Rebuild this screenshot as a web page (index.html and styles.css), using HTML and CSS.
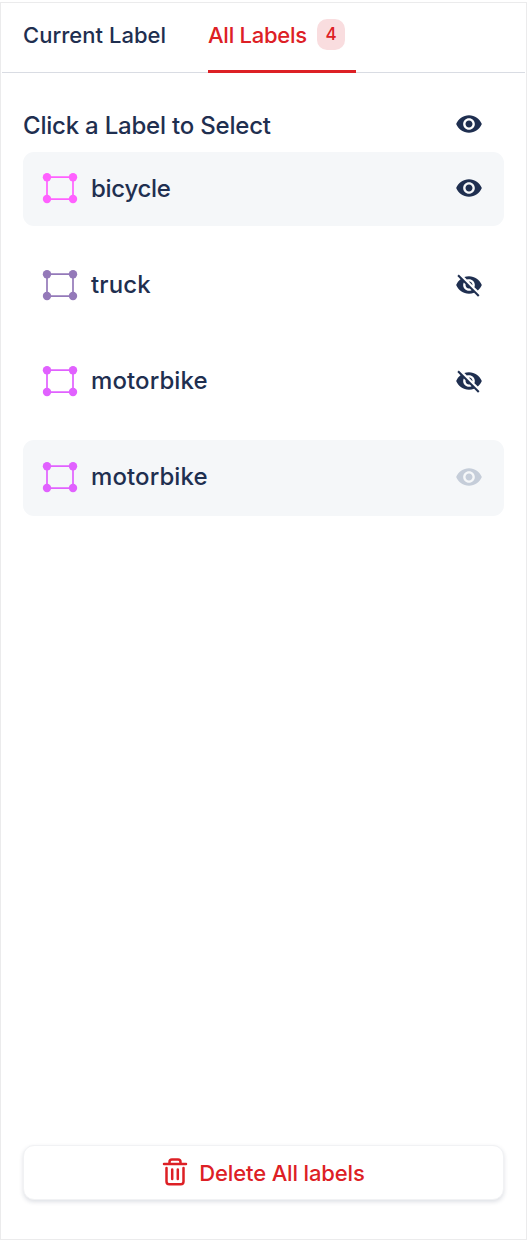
FILE: index.html
```html
<!DOCTYPE html>
<html lang="en">
<head>
<meta charset="utf-8">
<title>Labels</title>
<link rel="stylesheet" href="styles.css">
</head>
<body>
<svg class="defs" aria-hidden="true">
  <symbol id="eye" viewBox="0 0 24 24"><path d="M12 4.5C7 4.5 2.73 7.61 1 12c1.73 4.39 6 7.5 11 7.5s9.27-3.11 11-7.5c-1.73-4.39-6-7.5-11-7.5zM12 17c-2.76 0-5-2.24-5-5s2.240-5 5-5 5 2.240 5 5-2.240 5-5 5zm0-8c-1.660 0-3 1.340-3 3s1.340 3 3 3 3-1.340 3-3-1.340-3-3-3z"/></symbol>
  <symbol id="eye-off" viewBox="0 0 24 24"><path d="M12 7c2.760 0 5 2.240 5 5 0 .65-.13 1.260-.36 1.830l2.920 2.920c1.510-1.260 2.700-2.890 3.430-4.750-1.730-4.390-6-7.500-11-7.500-1.400 0-2.740.25-3.980.70l2.160 2.160C10.740 7.130 11.350 7 12 7zM2 4.270l2.280 2.280.46.46C3.080 8.300 1.780 10.020 1 12c1.730 4.390 6 7.500 11 7.500 1.550 0 3.030-.3 4.380-.84l.42.42L19.730 22 21 20.730 3.270 3 2 4.270zM7.530 9.800l1.550 1.550c-.05.21-.08.43-.08.65 0 1.660 1.340 3 3 3 .22 0 .44-.03.65-.08l1.550 1.550c-.67.33-1.410.53-2.200.53-2.760 0-5-2.240-5-5 0-.79.2-1.530.53-2.200zm4.310-.78l3.150 3.150.02-.16c0-1.660-1.340-3-3-3l-.17.01z"/></symbol>
  <symbol id="bbox" viewBox="0 0 36 32"><path d="M5 5.200h26v22H5z" fill="none" stroke="currentColor" stroke-width="1.700"/><circle cx="5" cy="5.200" r="4.200"/><circle cx="31" cy="5.200" r="4.200"/><circle cx="5" cy="27" r="4.200"/><circle cx="31" cy="27" r="4.200"/></symbol>
</svg>
<main class="panel">
  <nav class="tabs">
    <a class="tab">Current Label</a>
    <a class="tab tab-active"><span class="tab-name">All Labels</span><span class="badge">4</span></a>
  </nav>
  <header class="heading">
    <h1 class="title">Click a Label to Select</h1>
    <svg class="eye"><use href="#eye"/></svg>
  </header>
  <ul class="list">
    <li class="row row-first row-shaded"><svg class="box pink"><use href="#bbox"/></svg><span class="name bicycle">bicycle</span><svg class="eye"><use href="#eye"/></svg></li>
    <li class="row"><svg class="box purple"><use href="#bbox"/></svg><span class="name">truck</span><svg class="eye"><use href="#eye-off"/></svg></li>
    <li class="row"><svg class="box violet"><use href="#bbox"/></svg><span class="name">motorbike</span><svg class="eye"><use href="#eye-off"/></svg></li>
    <li class="row row-shaded"><svg class="box violet"><use href="#bbox"/></svg><span class="name">motorbike</span><svg class="eye eye-muted"><use href="#eye"/></svg></li>
  </ul>
  <button class="delete">
    <svg class="trash" viewBox="0 0 26 28"><path d="M2 6h22M7.500 5.500V4Q7.500 1.500 10 1.500h6Q18.500 1.500 18.500 4v1.500M4.500 10V23.500Q4.500 26.300 7.300 26.300h11.400Q21.500 26.300 21.500 23.500V10M10.200 11.500v9.500M15.800 11.500v9.500"/></svg>
    <span>Delete All labels</span>
  </button>
</main>
</body>
</html>
```

FILE: styles.css
```css
* { box-sizing: border-box; }
body {
  margin: 0;
  background: #fff;
  color: #1f2f50;
  font-family: Inter, "Liberation Sans", sans-serif;
}
.defs { display: none; }
.panel {
  display: flex;
  flex-direction: column;
  width: 527px;
  height: 1238px;
  margin-top: 2px;
  border: 1px solid #ebebec;
}
.tabs {
  display: flex;
  gap: 42px;
  height: 70px;
  margin: 0 1px;
  padding-left: 21px;
  border-bottom: 1px solid #d9dce3;
}
.tab {
  display: flex;
  width: 143px;
  height: 70px;
  padding-top: 16px;
  font-size: 22px;
  font-weight: 450;
  line-height: 32px;
  letter-spacing: 0.03px;
  white-space: nowrap;
}
.tab-active {
  width: 148px;
  border-bottom: 3px solid #dd2025;
  color: #dd2025;
  letter-spacing: -0.25px;
}
.tab-name { width: 109px; }
.badge {
  width: 28px;
  height: 31px;
  border-radius: 10px;
  background: #f9dddf;
  font-size: 17px;
  line-height: 31px;
  text-align: center;
}
.heading {
  display: flex;
  align-items: center;
  justify-content: space-between;
  height: 36px;
  margin: 33px 43px 0 22px;
}
.title {
  margin: 0;
  padding-top: 3px;
  font-size: 24px;
  font-weight: 450;
  line-height: 36px;
  letter-spacing: -0.21px;
}
.eye {
  width: 28px;
  height: 28px;
  fill: currentColor;
}
.eye-muted { color: #c5cdd9; }
.list {
  display: grid;
  gap: 20px;
  margin: 10px 22px 0;
  padding: 0;
  list-style: none;
}
.row {
  display: flex;
  align-items: center;
  height: 76px;
  padding: 0 21px 2px 19px;
  border-radius: 11px;
}
.row-first {
  height: 74px;
  margin-bottom: 2px;
}
.row-shaded { background: #f5f7f9; }
.box {
  width: 36px;
  height: 32px;
  fill: currentColor;
}
.pink { color: #ff61ff; }
.purple { color: #9479b9; }
.violet { color: #e161ff; }
.name {
  flex: 1;
  margin-left: 13px;
  font-size: 24px;
  font-weight: 450;
  line-height: 32px;
  letter-spacing: 0.1px;
}
.row-first .name {
  padding-top: 2px;
  letter-spacing: -0.3px;
}
.delete {
  display: flex;
  align-items: center;
  justify-content: center;
  gap: 11px;
  height: 55px;
  margin: auto 22px 39px;
  padding: 0;
  border: 1px solid #f1f2f4;
  border-radius: 11px;
  background: #fff;
  box-shadow: 0 2px 4px rgba(31, 47, 80, 0.15);
  color: #dd2025;
  font: 450 22px/32px Inter, "Liberation Sans", sans-serif;
  letter-spacing: -0.15px;
}
.trash {
  width: 26px;
  height: 28px;
  margin-bottom: 2px;
  fill: none;
  stroke: currentColor;
  stroke-width: 2.5;
  stroke-linecap: round;
}
```
